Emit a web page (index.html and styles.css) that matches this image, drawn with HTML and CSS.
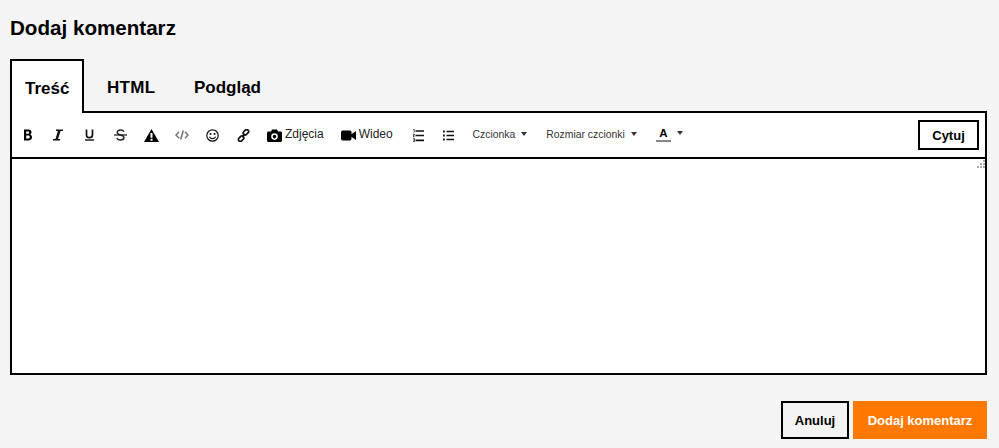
FILE: index.html
```html
<!DOCTYPE html>
<html lang="pl">
<head>
<meta charset="utf-8">
<title>Dodaj komentarz</title>
<link rel="stylesheet" href="styles.css">
</head>
<body>
<main class="page">
  <h1 class="title">Dodaj komentarz</h1>
  <nav class="tabs">
    <span class="tab tab-active">Treść</span>
    <span class="tab tab-html">HTML</span>
    <span class="tab tab-preview">Podgląd</span>
  </nav>
  <section class="editor">
    <div class="toolbar">
      <span class="tool t-b"><svg width="10" height="12" viewBox="0 0 10 12"><path d="M1 .5h4.400c2 0 3.100 1 3.100 2.700 0 1-.5 1.800-1.300 2.200 1.100.4 1.800 1.400 1.800 2.700 0 2-1.400 3.400-3.600 3.400H1zM3.200 2.500v2.200h1.900c.7 0 1.100-.4 1.100-1.100S5.800 2.500 5.100 2.500zM3.200 6.600v2.900h2.100c.9 0 1.400-.5 1.400-1.500S6.200 6.600 5.300 6.600z" fill="#000" fill-rule="evenodd"/></svg></span>
      <span class="tool t-i"><svg width="12" height="12" viewBox="0 0 12 12"><path d="M4 1.200h7M1 10.800h7" fill="none" stroke="#111" stroke-width="1.400"/><path d="M6.200 1.200h2.600L5.800 10.800H3.200z" fill="#111"/></svg></span>
      <span class="tool t-u"><svg width="11" height="12" viewBox="0 0 11 12"><path d="M2.500 .5v5.300c0 1.900 1.100 2.900 3 2.900s3-1 3-2.900V.5" fill="none" stroke="#111" stroke-width="1.700"/><path d="M1 11h9" stroke="#111" stroke-width="1.400"/></svg></span>
      <span class="tool t-s"><svg width="13" height="12" viewBox="0 0 13 12"><path d="M10 2.700C9.300 1.500 8 1 6.500 1 4.600 1 3.300 1.900 3.300 3.400c0 3.200 6.600 2 6.600 5.100 0 1.500-1.400 2.500-3.400 2.500-1.700 0-3-.6-3.700-1.900" fill="none" stroke="#222" stroke-width="1.500"/><path d="M0 6h13" stroke="#222" stroke-width="1.300"/></svg></span>
      <span class="tool t-w"><svg width="15" height="13" viewBox="0 0 15 13"><path d="M7.500 0L15 13H0zM6.500 4v4.800h2V4zM6.500 9.800v1.900h2V9.800z" fill="#000" fill-rule="evenodd"/></svg></span>
      <span class="tool t-c"><svg width="14" height="10" viewBox="0 0 14 10"><path d="M4 1.800L1 5l3 3.200M10 1.800L13 5l-3 3.200M8.300.5L5.700 9.500" fill="none" stroke="#777" stroke-width="1.600"/></svg></span>
      <span class="tool t-e"><svg width="13" height="13" viewBox="0 0 13 13"><circle cx="6.500" cy="6.500" r="5.700" fill="none" stroke="#111" stroke-width="1.200"/><circle cx="4.500" cy="5" r="1.050" fill="#111"/><circle cx="8.500" cy="5" r="1.050" fill="#111"/><path d="M3.400 7.800c.7 1.300 1.800 1.900 3.100 1.900s2.400-.6 3.100-1.900" fill="none" stroke="#111" stroke-width="1.200"/></svg></span>
      <span class="tool t-l"><svg width="13" height="13" viewBox="0 0 13 13"><g fill="none" stroke="#111" stroke-width="1.700"><rect x="5.900" y="1.400" width="6" height="3.800" rx="1.900" transform="rotate(-45 8.900 3.300)"/><rect x="1.100" y="7.800" width="6" height="3.800" rx="1.900" transform="rotate(-45 4.100 9.700)"/><path d="M5.200 7.800l2.600-2.600"/></g></svg></span>
      <span class="tool t-photo"><svg width="15" height="13" viewBox="0 0 15 13"><path d="M1.500 2.500H4L5 .5h5l1 2h2.500c.8 0 1.500.7 1.500 1.500v7.500c0 .8-.7 1.500-1.500 1.500h-12C.7 13 0 12.300 0 11.500V4c0-.8.700-1.500 1.500-1.500zM7.500 4.300a3.300 3.300 0 100 6.600 3.300 3.300 0 000-6.600zM7.500 5.800a1.800 1.800 0 110 3.600 1.800 1.800 0 010-3.600z" fill="#000" fill-rule="evenodd"/></svg><span class="tool-label">Zdjęcia</span></span>
      <span class="tool t-video"><svg width="15" height="11" viewBox="0 0 15 11"><rect x="0" y="0.500" width="10.500" height="10" rx="1.800" fill="#000"/><path d="M10 4.500L15 1v9l-5-3.500z" fill="#000"/></svg><span class="tool-label">Wideo</span></span>
      <span class="tool t-ol"><svg width="11" height="13" viewBox="0 0 11 13"><path d="M2.500 2h8.500M2.500 6.500h8.500M2.500 11.300h8.500" stroke="#111" stroke-width="1.700"/><path d="M.3 .4h.9v2.900M0 5h1.300v1.200H.2v1.300h1.300M0 9.300h1.400v3.300H0M.3 11h1" fill="none" stroke="#111" stroke-width=".8"/></svg></span>
      <span class="tool t-ul"><svg width="11" height="11" viewBox="0 0 11 11"><path d="M3.500 1.500H11M3.500 5.500H11M3.500 9.500H11" stroke="#111" stroke-width="1.600"/><path d="M0 1.500h1.800M0 5.500h1.800M0 9.500h1.800" stroke="#111" stroke-width="1.800"/></svg></span>
      <span class="tool t-font"><span class="select-label">Czcionka</span><i class="caret"></i></span>
      <span class="tool t-size"><span class="select-label">Rozmiar czcionki</span><i class="caret"></i></span>
      <span class="tool t-color"><span class="color-a">A</span><i class="caret"></i></span>
      <button class="quote" type="button">Cytuj</button>
    </div>
    <div class="body-area">
      <svg class="grip" width="8" height="8" viewBox="0 0 8 8"><path d="M6 0h2v2H6zM3 3h2v2H3zM6 3h2v2H6zM0 6h2v2H0zM3 6h2v2H3zM6 6h2v2H6z" fill="#aaa"/></svg>
    </div>
  </section>
  <footer class="actions">
    <button class="btn btn-cancel" type="button">Anuluj</button>
    <button class="btn btn-submit" type="button">Dodaj komentarz</button>
  </footer>
</main>
</body>
</html>
```
FILE: styles.css
```css
* { box-sizing: border-box; }
html, body { margin: 0; padding: 0; }
body {
  width: 999px;
  height: 448px;
  overflow: hidden;
  background: #f4f4f4;
  color: #000;
  font-family: "Liberation Sans", Arial, sans-serif;
}
.page { padding: 16px 12px 0 10px; }
.title {
  margin: 0;
  font-size: 20.6px;
  line-height: 23px;
  font-weight: 700;
}
.tabs {
  display: flex;
  align-items: stretch;
  height: 52px;
  margin-top: 20px;
  position: relative;
  z-index: 1;
}
.tab {
  font-size: 17px;
  font-weight: 700;
  line-height: 20px;
  padding-top: 18px;
}
.tab-active {
  width: 74px;
  height: 54px;
  padding-left: 13px;
  background: #fff;
  border: 2px solid #000;
  border-bottom: 0;
}
.tab-html { margin-left: 23px; letter-spacing: .3px; padding-top: 19px; }
.tab-preview { margin-left: 38.5px; padding-top: 19px; }
.editor {
  background: #fff;
  border: 2px solid #000;
  height: 264px;
}
.toolbar {
  display: flex;
  align-items: center;
  height: 46px;
  padding: 0 6px 0 11px;
  border-bottom: 2px solid #000;
}
.tool { display: inline-flex; align-items: center; flex: none; }
.t-i { margin-left: 19px; }
.t-u { margin-left: 20px; }
.t-s { margin-left: 19px; }
.t-w { margin-left: 17px; }
.t-c { margin-left: 16px; }
.t-e { margin-left: 17px; }
.t-l { margin-left: 18px; }
.t-photo { margin-left: 17px; }
.t-video { margin-left: 17px; }
.t-ol { margin-left: 19.8px; }
.t-ul { margin-left: 19px; }
.t-font { margin-left: 19px; }
.t-size { margin-left: 19px; }
.t-color { margin-left: 19px; }
.tool-label { margin: 0 0 2px 3px; font-size: 12px; line-height: 15px; color: #222; }
.select-label { margin-bottom: 2px; font-size: 10.4px; line-height: 13px; color: #333; }
.caret {
  display: inline-block;
  width: 0;
  height: 0;
  margin: 0 0 2px 6px;
  border-left: 3.5px solid transparent;
  border-right: 3.5px solid transparent;
  border-top: 4px solid #333;
}
.color-a {
  display: inline-block;
  width: 15px;
  font-size: 11.5px;
  line-height: 13px;
  font-weight: 700;
  text-align: center;
  border-bottom: 2px solid #888;
  margin-bottom: 1px;
}
.t-color .caret { margin: 0 0 4px 6px; }
.quote {
  margin-left: auto;
  width: 61px;
  height: 30px;
  padding: 0;
  background: #fff;
  border: 2px solid #000;
  border-radius: 0;
  font: 700 13px/15px "Liberation Sans", Arial, sans-serif;
  color: #000;
}
.body-area { position: relative; height: 214px; background: #fff; }
.grip { position: absolute; right: 0; top: 1px; }
.actions {
  display: flex;
  justify-content: flex-end;
  gap: 4px;
  margin-top: 26px;
}
.btn {
  height: 38px;
  padding: 0;
  border-radius: 0;
  font: 700 13px/15px "Liberation Sans", Arial, sans-serif;
}
.btn-cancel {
  width: 68px;
  background: #f4f4f4;
  color: #000;
  border: 2px solid #000;
}
.btn-submit {
  width: 134px;
  background: #ff7900;
  color: #fff;
  border: 0;
}
```
